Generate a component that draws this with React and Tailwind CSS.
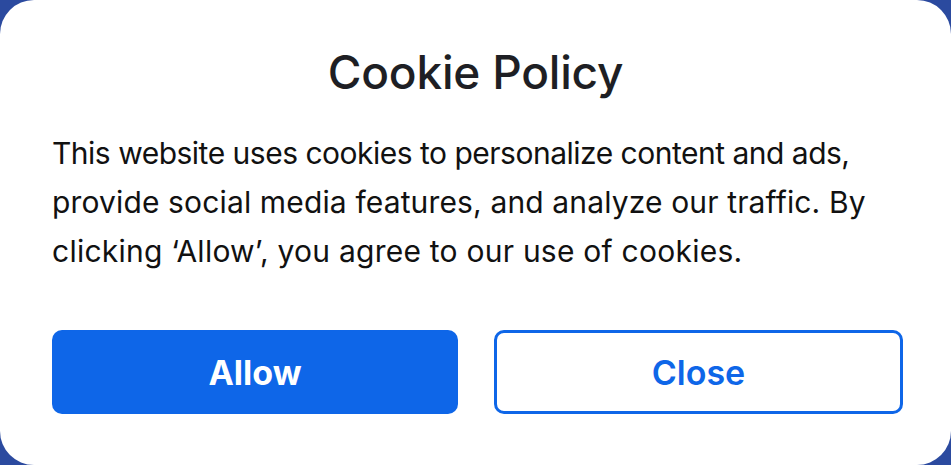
export default function App() {
  return (
    <div className="w-[951px] h-[465px] bg-[#2b4a9f] overflow-hidden" style={{ fontFamily: 'Inter, "Noto Sans", sans-serif' }}>
      <div className="w-full h-full bg-white rounded-[34px] pl-[52px] pr-[48px] pt-[44px]">
        <h1 className="text-center text-[46px] leading-[56px] font-medium text-[#1e1f24] tracking-[-0.2px] pr-[4px]">
          Cookie Policy
        </h1>
        <p className="mt-[29px] text-[30px] leading-[49px] text-[#111] whitespace-nowrap">
          <span className="block tracking-[-0.5px]">This website uses cookies to personalize content and ads,</span>
          <span className="block tracking-[0.14px]">provide social media features, and analyze our traffic. By</span>
          <span className="block tracking-[0.24px]">clicking ‘Allow’, you agree to our use of cookies.</span>
        </p>
        <div className="mt-[54px] flex gap-[36px]">
          <button className="shrink-0 w-[406px] h-[84px] rounded-[10px] bg-[#0e66e8] text-white text-[34px] font-bold">
            Allow
          </button>
          <button className="shrink-0 w-[409px] h-[84px] rounded-[10px] border-[3px] border-[#0e66e8] bg-white text-[#0e66e8] text-[34px] font-semibold">
            Close
          </button>
        </div>
      </div>
    </div>
  );
}
